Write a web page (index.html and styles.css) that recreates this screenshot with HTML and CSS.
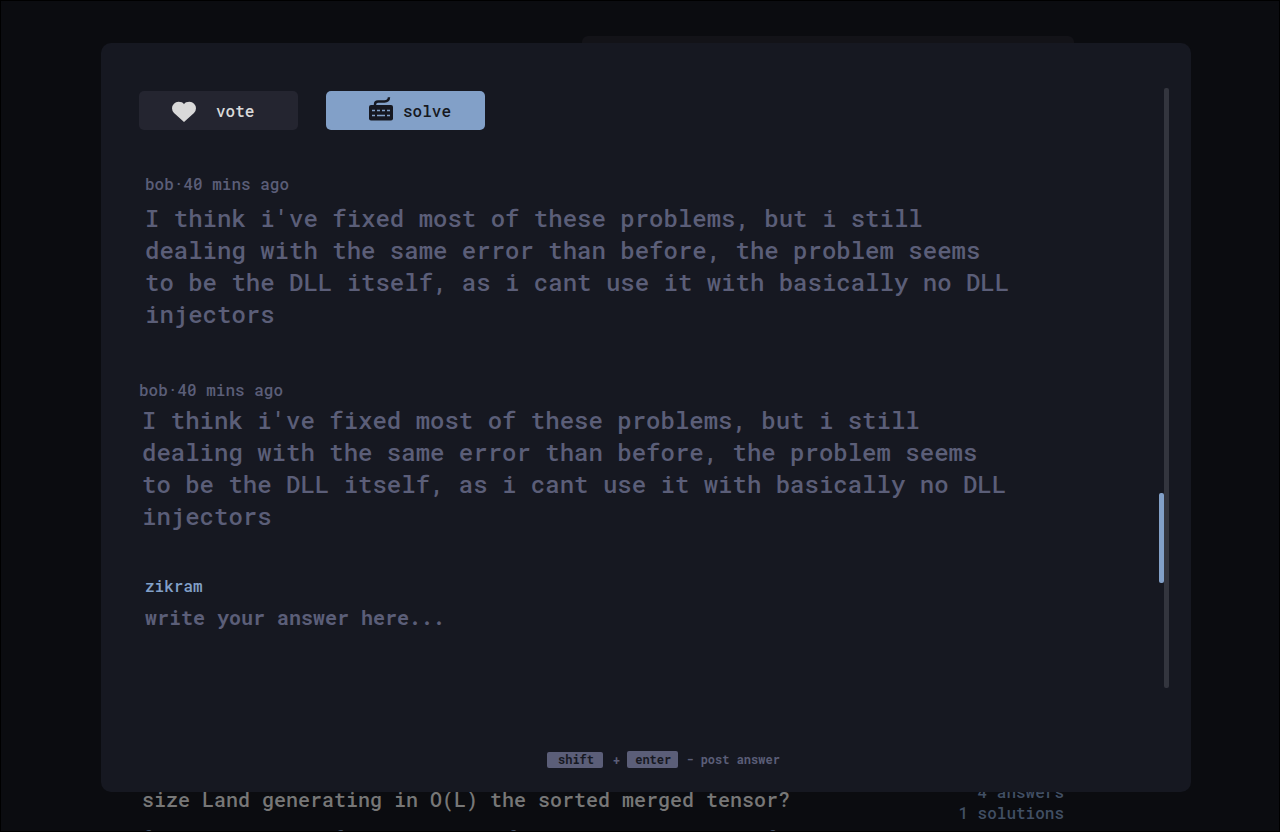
FILE: index.html
```html
<!DOCTYPE html>
<html lang="en">
<head>
<meta charset="utf-8">
<title>Answers</title>
<link rel="stylesheet" href="styles.css">
</head>
<body>
<div class="app">
  <div class="page">
    <div class="search"></div>
    <article class="question">
      <div class="question-main">
        <h2 class="question-title">size Land generating in O(L) the sorted merged tensor?</h2>
        <p class="excerpt">from abuse our can "file" as new era of at a base when we can to file "i"</p>
      </div>
      <div class="stats"><span>4 answers</span><span>1 solutions</span></div>
    </article>
  </div>
  <div class="overlay">
    <main class="modal" role="dialog" aria-label="Answers">
      <div class="content">
        <div class="actions">
          <button class="btn btn-vote" type="button">
            <svg width="24" height="22" viewBox="0 0 24 22" aria-hidden="true"><path fill="currentColor" d="M12 21 2 12A6.600 6.600 0 0 1 0 7.200A6.500 6.500 0 0 1 6.500 0.800C9 0.800 11 1.600 12 3.200C13 1.600 15 0.800 17.500 0.800A6.500 6.500 0 0 1 24 7.200A6.600 6.600 0 0 1 22 12Z"/></svg>
            <span>vote</span>
          </button>
          <button class="btn btn-solve" type="button">
            <svg width="24" height="24" viewBox="0 0 24 24" aria-hidden="true">
              <path fill="none" stroke="currentColor" stroke-width="2.400" d="M6 9V7.500Q6 4.500 9 4.500H15.500Q19.800 4.500 20 0.300"/>
              <rect fill="currentColor" y="8" width="24" height="15.500" rx="2"/>
              <path fill="none" stroke="#82a0c8" stroke-width="1.500" d="M3 13.500h3M8 13.500h3M13 13.500h3M18 13.500h3M3 18.500h3M8 18.500h8M18 18.500h3"/>
            </svg>
            <span>solve</span>
          </button>
        </div>
        <article class="answer answer-first">
          <div class="meta">bob·40 mins ago</div>
          <p class="answer-text">I think i've fixed most of these problems, but i still dealing with the same error than before, the problem seems to be the DLL itself, as i cant use it with basically no DLL injectors</p>
        </article>
        <article class="answer answer-second">
          <div class="meta">bob·40 mins ago</div>
          <p class="answer-text">I think i've fixed most of these problems, but i still dealing with the same error than before, the problem seems to be the DLL itself, as i cant use it with basically no DLL injectors</p>
        </article>
        <form class="reply">
          <label class="author" for="reply">zikram</label>
          <textarea class="reply-input" id="reply" placeholder="write your answer here..."></textarea>
        </form>
      </div>
      <div class="scrollbar"><div class="thumb"></div><div class="track"></div></div>
      <footer class="hint"><kbd class="key key-shift">shift</kbd><span class="plus">+</span><kbd class="key key-enter">enter</kbd><span class="hint-text">- post answer</span></footer>
    </main>
  </div>
</div>
</body>
</html>
```
FILE: styles.css
```css
* { box-sizing: border-box; }
body {
  margin: 0;
  background: #0b0c10;
  font-family: "Roboto Mono", "Liberation Mono", monospace;
  font-weight: 500;
  color: #5b5e78;
}
h2, p { margin: 0; font-weight: inherit; }
.app {
  position: relative;
  min-height: 100vh;
  border: 1px solid #000;
  display: flex;
}
.page {
  flex: 1;
  height: calc(100vh - 2px);
  overflow: hidden;
  padding: 35px 206px 0 141px;
  display: flex;
  flex-direction: column;
  justify-content: space-between;
}
.search {
  width: 492px;
  height: 44px;
  margin-left: 440px;
  border-radius: 6px;
  background: #131318;
}
.question {
  display: flex;
  justify-content: space-between;
  height: 50px;
  margin-right: 9px;
}
.question-title { font-size: 20px; line-height: 36px; color: #777; white-space: nowrap; }
.excerpt { margin-top: 10px; font-size: 16px; line-height: 20px; color: #414f64; white-space: nowrap; }
.stats {
  display: flex;
  flex-direction: column;
  text-align: right;
  font-size: 16px;
  line-height: 21px;
  color: #414f64;
}
.overlay {
  position: absolute;
  inset: 0;
  display: flex;
  padding: 42px 88px 39px 100px;
}
.modal {
  flex: 1;
  display: grid;
  grid-template-columns: 1fr auto;
  grid-template-rows: 1fr auto;
  padding: 45px 22px 24px 38px;
  border-radius: 10px;
  background: #161821;
}
.content { display: flex; flex-direction: column; }
.actions { display: flex; gap: 28px; padding-top: 3px; }
.btn {
  display: flex;
  align-items: center;
  width: 159px;
  height: 39px;
  padding: 0 0 0 33px;
  border: 0;
  border-radius: 5px;
  font: inherit;
  font-size: 16px;
}
.btn-vote { gap: 20px; background: #242530; color: #d9d9d9; }
.btn-vote svg { margin-top: 2px; }
.btn-solve { gap: 10px; padding-left: 43px; background: #82a0c8; color: #161821; }
.btn-solve svg { margin-bottom: 4px; }
.meta { font-size: 16px; line-height: 21px; }
.answer-text { max-width: 872px; font-size: 24px; line-height: 32px; }
.answer-first { margin-top: 43px; padding-left: 6px; }
.answer-first .answer-text { margin-top: 8px; }
.answer-second { margin-top: 49px; }
.answer-second .answer-text { margin-top: 4px; padding-left: 3px; }
.reply { display: flex; flex-direction: column; margin-top: 43px; padding-left: 6px; }
.author { font-size: 16px; line-height: 21px; color: #82a0c8; }
.reply-input {
  height: 64px;
  margin-top: 8px;
  padding: 0;
  border: 0;
  outline: 0;
  resize: none;
  background: none;
  color: #5b5e78;
  font: inherit;
  font-size: 20px;
  font-weight: 700;
  line-height: 26px;
}
.reply-input::placeholder { color: #5b5e78; opacity: 1; }
.scrollbar { display: flex; height: 600px; }
.thumb { width: 5px; height: 90px; margin-top: 405px; border-radius: 2px; background: #82a0c8; }
.track { width: 5px; border-radius: 2px; background: #33353e; }
.hint {
  grid-column: 1 / -1;
  display: flex;
  align-items: flex-end;
  padding-left: 408px;
  font-size: 12px;
  font-weight: 700;
  line-height: 15px;
}
.key { font: inherit; border-radius: 2px; background: #5b5e78; color: #161821; }
.key-shift { padding: 0 9px 1px 11px; }
.key-enter { padding: 1px 7px 1px 8px; }
.plus { padding: 0 7px 0 10px; }
.hint-text { padding: 0 0 1px 8px; }
```
